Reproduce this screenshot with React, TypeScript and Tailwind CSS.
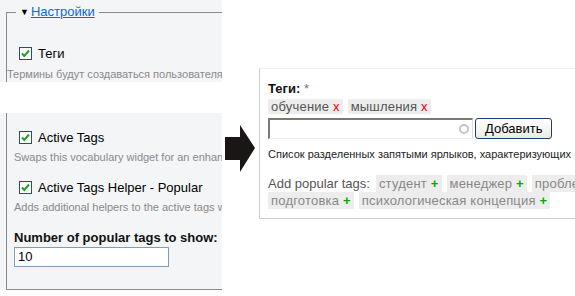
import React from "react";

const font = { fontFamily: '"Liberation Sans", Arial, sans-serif' };

function Check() {
    return (
        <svg width="13" height="13" viewBox="0 0 13 13" className="shrink-0">
            <rect x="0.5" y="0.5" width="12" height="12" fill="#fff" stroke="#1c5180" />
            <path d="M3 6.5 L5.3 9 L10 3.5" fill="none" stroke="#21a121" strokeWidth="2" />
        </svg>
    );
}

function CheckRow({ label }: { label: string }) {
    return (
        <div className="flex items-center gap-[6px] pl-[12px] text-[13px] text-black">
            <Check />
            <span>{label}</span>
        </div>
    );
}

function Tag({ text, mark, color }: { text: string; mark: string; color: string }) {
    return (
        <span className="inline-block bg-[#ededed] px-[3px] mr-[5px] whitespace-nowrap tracking-[0.2px]">
            {text} <span className={color}>{mark}</span>
        </span>
    );
}

export default function App() {
    return (
        <div className="w-[575px] h-[296px] bg-white flex overflow-hidden" style={font}>
            {/* левая колонка */}
            <div className="w-[222px] shrink-0 flex flex-col">
                <div className="h-[82px] bg-[#f3f5f7] pl-[6px] pt-[5px] overflow-hidden">
                    <fieldset className="border-l border-t border-[#8a8a8a] h-[80px]">
                        <legend className="ml-[9px] px-[4px] text-[13px] leading-[13px]">
                            <span className="text-[9px] mr-[2px] align-[1px]">▼</span>
                            <a className="text-[#0b6ad6] underline">Настройки</a>
                        </legend>
                        <div className="pt-[25px]">
                            <CheckRow label="Теги" />
                            <div className="mt-[4px] text-[11px] text-[#8a8a8a] whitespace-nowrap leading-[12px]">
                                Термины будут создаваться пользователями
                            </div>
                        </div>
                    </fieldset>
                </div>
                <div className="mt-[31px] h-[177px] bg-[#f3f5f7] pl-[6px]">
                    <div className="h-full border-l border-b border-[#8a8a8a] pt-[15px] overflow-hidden">
                        <CheckRow label="Active Tags" />
                        <div className="mt-[3px] pl-[7px] text-[11px] text-[#8a8a8a] whitespace-nowrap leading-[12px]">
                            Swaps this vocabulary widget for an enhanced one
                        </div>
                        <div className="mt-[15px]">
                            <CheckRow label="Active Tags Helper - Popular" />
                        </div>
                        <div className="mt-[4px] pl-[7px] text-[11px] text-[#8a8a8a] whitespace-nowrap leading-[12px]">
                            Adds additional helpers to the active tags widget
                        </div>
                        <div className="mt-[18px] pl-[7px] text-[13px] font-bold text-[#111] whitespace-nowrap leading-[14px]">
                            Number of popular tags to show:
                        </div>
                        <div className="mt-[2px] ml-[7px] w-[155px] h-[20px] border border-[#7f9db9] bg-white text-[13px] pl-[3px] leading-[18px]">
                            10
                        </div>
                    </div>
                </div>
            </div>

            {/* стрелка */}
            <div className="w-[37px] shrink-0 pt-[125px] pl-[3px]">
                <svg width="32" height="48" viewBox="0 0 32 48">
                    <polygon points="0,12 15,12 15,0 30,23 15,47 15,35 0,35" fill="#1a1616" />
                </svg>
            </div>

            {/* правая панель */}
            <div className="flex-1 min-w-0 mt-[68px] h-[151px] border-l border-b border-t border-l-[#cfcfcf] border-b-[#cfcfcf] border-t-[#f1f1f1] pl-[8px] pt-[12px] overflow-hidden">
                <div className="w-[380px]">
                    <div className="text-[13px] leading-[15px]">
                        <b className="text-[#111]">Теги:</b> <span className="text-[#777]">*</span>
                    </div>
                    <div className="mt-[3px] text-[13px] leading-[15px] text-[#555]">
                        <Tag text="обучение" mark="x" color="text-[#e00]" />
                        <Tag text="мышления" mark="x" color="text-[#e00]" />
                    </div>
                    <div className="mt-[4px] flex items-center">
                        <div className="w-[205px] h-[21px] border-t-2 border-l-2 border-[#7a7a72] border-r border-b border-r-[#ddd] border-b-[#eee] bg-white flex items-center justify-end pr-[3px]">
                            <span className="w-[10px] h-[10px] rounded-full border-2 border-[#c4c4c4]" />
                        </div>
                        <button className="ml-[2px] h-[21px] px-[9px] border border-[#1e3d68] rounded-[3px] bg-gradient-to-b from-white to-[#ecece6] text-[13px] leading-[19px] text-black">
                            Добавить
                        </button>
                    </div>
                    <div className="mt-[9px] text-[11px] leading-[13px] text-[#222] whitespace-nowrap">
                        Список разделенных запятыми ярлыков, характеризующих
                    </div>
                    <div className="mt-[14px] text-[13px] leading-[17px] text-[#888]">
                        <span className="text-[#555] mr-[6px] whitespace-nowrap">Add popular tags:</span>
                        <Tag text="студент" mark="+" color="text-[#0a0] font-bold" />
                        <Tag text="менеджер" mark="+" color="text-[#0a0] font-bold" />
                        <Tag text="проблема" mark="+" color="text-[#0a0] font-bold" />
                        <Tag text="подготовка" mark="+" color="text-[#0a0] font-bold" />
                        <Tag text="психологическая концепция" mark="+" color="text-[#0a0] font-bold" />
                    </div>
                </div>
            </div>
        </div>
    );
}
